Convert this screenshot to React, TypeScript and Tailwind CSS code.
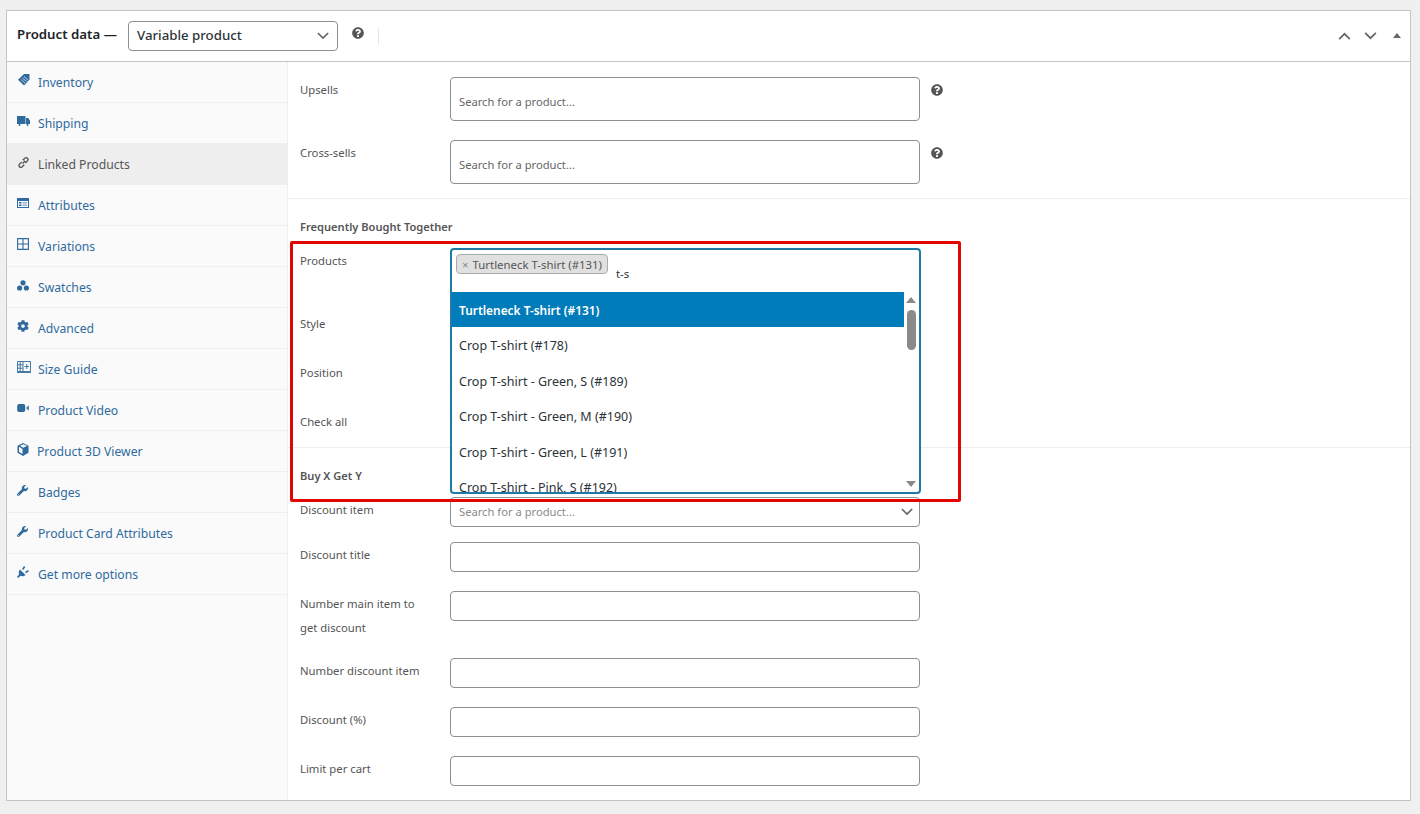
import type { ReactNode } from "react";
import { FaCog, FaQuestionCircle, FaWrench } from "react-icons/fa";

const font = { fontFamily: '"Noto Sans", "Open Sans", sans-serif' };

function TagIcon() {
  return (
    <svg viewBox="0 0 14 14" className="w-[14px] h-[14px]" fill="currentColor">
      <path d="M7 1h5.500v5.500L7 12.500 1 6.800z" />
      <path d="M4 6.500l4 3.600M5.500 5l4 3.600M7 3.500l4 3.600" stroke="#fafafa" strokeWidth="0.7" fill="none" />
    </svg>
  );
}
function TruckIcon() {
  return (
    <svg viewBox="0 0 13 10" className="w-[13px] h-[10px]" fill="currentColor">
      <path d="M0 0h8.500v8H0zM9 2h2.200L13 4.500V8H9z" />
      <circle cx="2.500" cy="9" r="1" />
      <circle cx="10.500" cy="9" r="1" />
    </svg>
  );
}
function LinkIcon() {
  return (
    <svg viewBox="0 0 14 14" className="w-[13px] h-[13px]" fill="none" stroke="currentColor" strokeWidth="1.500">
      <path d="M6 8l3-3M5 6.500L2.500 9a2 2 0 0 0 2.800 2.800L7.800 9.300M6.200 4.700L8.700 2.200A2 2 0 0 1 11.500 5L9 7.500" />
    </svg>
  );
}
function FormIcon() {
  return (
    <svg viewBox="0 0 12 10" className="w-[12px] h-[10px]" fill="currentColor">
      <path fillRule="evenodd" d="M0 0h12v10H0zM1 3v6h10V3z" />
      <path d="M2 4h2.500v1.500H2zM2 6.500h2.500V8H2zM5.500 4.500H10v.800H5.500zM5.500 6.800H10v.800H5.500z" />
    </svg>
  );
}
function GridIcon() {
  return (
    <svg viewBox="0 0 12 12" className="w-[12px] h-[12px]" fill="none" stroke="currentColor" strokeWidth="1.100">
      <path d="M.6.600h10.800v10.800H.6zM6 .6v10.800M.6 6h10.800" />
    </svg>
  );
}
function DotsIcon() {
  return (
    <svg viewBox="0 0 12 11" className="w-[12px] h-[11px]" fill="currentColor">
      <circle cx="6" cy="2.800" r="2.600" />
      <circle cx="2.600" cy="8" r="2.600" />
      <circle cx="9.400" cy="8" r="2.600" />
    </svg>
  );
}
function TablePlusIcon() {
  return (
    <svg viewBox="0 0 14 12" className="w-[14px] h-[12px]" fill="none" stroke="currentColor" strokeWidth="0.900">
      <path d="M.5.500h13v10H.5zM.5 3.800h5.500M.5 7.200h5.500M3.200.5v10M6 .5v10M7.500 5.500h4.500M9.800 3v5" />
      <path d="M0 11.500h14" />
    </svg>
  );
}
function VideoIcon() {
  return (
    <svg viewBox="0 0 13 9" className="w-[12px] h-[8px]" fill="currentColor">
      <rect x="0" y="0" width="9" height="9" rx="2" />
      <path d="M10 4.500L13 1.500v6z" />
    </svg>
  );
}
function CubeIcon() {
  return (
    <svg viewBox="0 0 12 13" className="w-[12px] h-[13px]" fill="currentColor">
      <path d="M6 0l5.500 2.800v7L6 13 .5 9.800v-7zM2 3.800v5.200l3.500 2V6zM3 2.800l3.200 2L10 3 6.500 1.200z" fillRule="evenodd" />
    </svg>
  );
}
function PlugIcon() {
  return (
    <svg viewBox="0 0 12 12" className="w-[12px] h-[12px]" fill="currentColor">
      <path d="M3 3.500l5.500 5.500c-1.500 1.500-3.500 1.500-4.800.8L1 12 0 11l2.200-2.700C1.500 7 1.500 5 3 3.500z" />
      <path d="M5 3l2-3 1.300 1L6.300 4zM8 6l3-2 1 1.300L9 7.300z" />
    </svg>
  );
}

const tabs: { label: string; icon: ReactNode; active?: boolean; textClass?: string }[] = [
  { label: "Inventory", icon: <TagIcon /> },
  { label: "Shipping", icon: <TruckIcon /> },
  { label: "Linked Products", icon: <LinkIcon />, active: true },
  { label: "Attributes", icon: <FormIcon /> },
  { label: "Variations", icon: <GridIcon /> },
  { label: "Swatches", icon: <DotsIcon /> },
  { label: "Advanced", icon: <FaCog className="w-[12px] h-[12px]" /> },
  { label: "Size Guide", icon: <TablePlusIcon /> },
  { label: "Product Video", icon: <VideoIcon /> },
  { label: "Product 3D Viewer", icon: <CubeIcon />, textClass: "ml-[-1px]" },
  { label: "Badges", icon: <FaWrench className="w-[11px] h-[11px]" /> },
  { label: "Product Card Attributes", icon: <FaWrench className="w-[11px] h-[11px]" /> },
  { label: "Get more options", icon: <PlugIcon /> },
];

const options = [
  "Crop T-shirt (#178)",
  "Crop T-shirt - Green, S (#189)",
  "Crop T-shirt - Green, M (#190)",
  "Crop T-shirt - Green, L (#191)",
  "Crop T-shirt - Pink, S (#192)",
];

function Chevron({ up = false, small = false }: { up?: boolean; small?: boolean }) {
  return (
    <svg
      viewBox="0 0 14 9"
      className={small ? "w-[12px] h-[8px]" : "w-[13px] h-[8px]"}
      fill="none"
      stroke="#666"
      strokeWidth="2"
    >
      <path d={up ? "M1 8l6-6 6 6" : "M1 1l6 6 6-6"} />
    </svg>
  );
}

function Field({ label, children, className = "" }: { label: string; children?: ReactNode; className?: string }) {
  return (
    <div className={`flex ${className}`}>
      <div className="w-[150px] shrink-0 pr-4 pt-px text-[11.300px] leading-6 text-[#555]">{label}</div>
      {children}
    </div>
  );
}

function TextBox({ tall = false, placeholder, muted = false }: { tall?: boolean; placeholder?: string; muted?: boolean }) {
  return (
    <div
      className={`w-[470px] ${tall ? "h-[44px] pt-[7px]" : "h-[30px]"} flex items-center rounded border border-[#8c8f94] bg-white px-2 text-[11.200px] ${muted ? "text-[#8a8a8a]" : "text-[#666]"}`}
    >
      {placeholder}
    </div>
  );
}

function Help() {
  return <FaQuestionCircle className="ml-[11px] mt-[7px] w-[12px] h-[12px] text-[#555]" />;
}

export default function App() {
  return (
    <div className="h-[814px] overflow-hidden bg-[#f0f0f1] pt-[10px] pl-[6px] pr-[9px]" style={font}>
      <div className="h-[791px] border border-[#c3c4c7] bg-white overflow-hidden">
        <div className="h-[51px] flex items-center border-b border-[#c3c4c7] pl-[10px] pr-[9px]">
          <span className="text-[13.250px] font-semibold text-[#1d2327] w-[111px] mt-[-2px] whitespace-nowrap">Product data —</span>
          <div className="w-[210px] h-[30px] flex items-center justify-between rounded border border-[#8c8f94] px-2 text-[13.250px] font-medium text-[#2c3338]">
            Variable product
            <Chevron small />
          </div>
          <FaQuestionCircle className="ml-[14px] mt-[-6px] w-[12px] h-[12px] text-[#555]" />
          <div className="ml-[14px] h-[17px] w-px bg-[#e5e5e5]" />
          <div className="ml-auto flex items-center gap-[13px]">
            <Chevron up />
            <Chevron />
            <div className="ml-[3px] mt-[-2px] h-0 w-0 border-x-[4px] border-b-[5px] border-x-transparent border-b-[#666]" />
          </div>
        </div>

        <div className="flex h-[739px]">
          <ul className="w-[281px] shrink-0 bg-[#fafafa] border-r border-[#eee]">
            {tabs.map((tab) => (
              <li
                key={tab.label}
                className={`h-[41px] flex items-center border-b border-[#eee] pl-[10px] text-[12.200px] ${tab.active ? "bg-[#eee] text-[#555]" : "text-[#2f6a9e]"}`}
              >
                <span className="w-[21px] h-[16px] mt-[-4px] flex items-center">{tab.icon}</span>
                <span className={`pt-[2px] ${tab.textClass ?? ""}`}>{tab.label}</span>
              </li>
            ))}
          </ul>

          <div className="flex-1 min-w-0">
            <section className="pl-3 pt-[15px] pb-[14px] border-b border-[#eee]">
              <Field label="Upsells">
                <TextBox tall placeholder="Search for a product..." />
                <Help />
              </Field>
              <Field label="Cross-sells" className="mt-[19px]">
                <TextBox tall placeholder="Search for a product..." />
                <Help />
              </Field>
            </section>

            <section className="pl-3 pt-4 h-[249px] border-b border-[#eee]">
              <div className="text-[11.100px] leading-6 font-semibold text-[#555]">Frequently Bought Together</div>
              <Field label="Products" className="relative mt-[9px] h-[63px]">
                <div className="absolute left-[150px] top-0 z-10 w-[471px] h-[246px] rounded border-2 border-[#1f7ba5] bg-white overflow-hidden text-[12.500px] text-[#2c3338]">
                  <div className="h-[42px] pl-[4px] pt-[4px] flex items-start">
                    <span className="h-[20px] w-[152px] flex items-center rounded border border-[#aaa] bg-[#e0e0e0] pl-[5px] pt-px text-[11.400px] text-[#555] whitespace-nowrap">
                      <span className="mr-[4px] text-[#888]">×</span>Turtleneck T-shirt (#131)
                    </span>
                    <span className="ml-2 mt-[11px] text-[11.400px] leading-[18px]">t-s</span>
                  </div>
                  <div className="flex">
                    <div className="flex-1 min-w-0">
                      <div className="h-[35px] mb-[0.500px] flex items-center pl-[7px] pt-[3px] whitespace-nowrap bg-[#007cba] text-white text-[11.900px] font-semibold">
                        Turtleneck T-shirt (#131)
                      </div>
                      {options.map((name) => (
                        <div key={name} className="h-[35.500px] flex items-center pl-[7px] pt-[3px] whitespace-nowrap">
                          {name}
                        </div>
                      ))}
                    </div>
                    <div className="relative w-[15px] shrink-0 h-[204px]">
                      <div className="absolute left-[2px] top-[5px] h-0 w-0 border-x-[5px] border-b-[6px] border-x-transparent border-b-[#8a8a8a]" />
                      <div className="absolute left-[3px] top-[18px] w-[9px] h-[40px] rounded-full bg-[#8a8a8a]" />
                      <div className="absolute left-[2px] top-[189px] h-0 w-0 border-x-[5px] border-t-[6px] border-x-transparent border-t-[#8a8a8a]" />
                    </div>
                  </div>
                </div>
                <div className="absolute left-[-10px] top-[-7px] z-20 w-[671px] h-[261px] rounded-[2px] border-[3px] border-[#e10600] pointer-events-none" />
              </Field>
              <Field label="Style" className="h-[49px]" />
              <Field label="Position" className="h-[49px]" />
              <Field label="Check all" />
            </section>

            <section className="pl-3 pt-[15px]">
              <div className="pt-px text-[11.100px] leading-6 font-semibold text-[#555] h-[24px]">Buy X Get Y</div>
              <Field label="Discount item" className="mt-[10px]">
                <div className="relative">
                  <TextBox muted placeholder="Search for a product..." />
                  <div className="absolute right-[7px] top-[11px]">
                    <Chevron small />
                  </div>
                </div>
              </Field>
              <Field label="Discount title" className="mt-[15px]">
                <TextBox />
              </Field>
              <Field label="Number main item to get discount" className="mt-[19px]">
                <TextBox />
              </Field>
              <Field label="Number discount item" className="mt-[18px]">
                <TextBox />
              </Field>
              <Field label="Discount (%)" className="mt-[19px]">
                <TextBox />
              </Field>
              <Field label="Limit per cart" className="mt-[19px]">
                <TextBox />
              </Field>
            </section>
          </div>
        </div>
      </div>
    </div>
  );
}
